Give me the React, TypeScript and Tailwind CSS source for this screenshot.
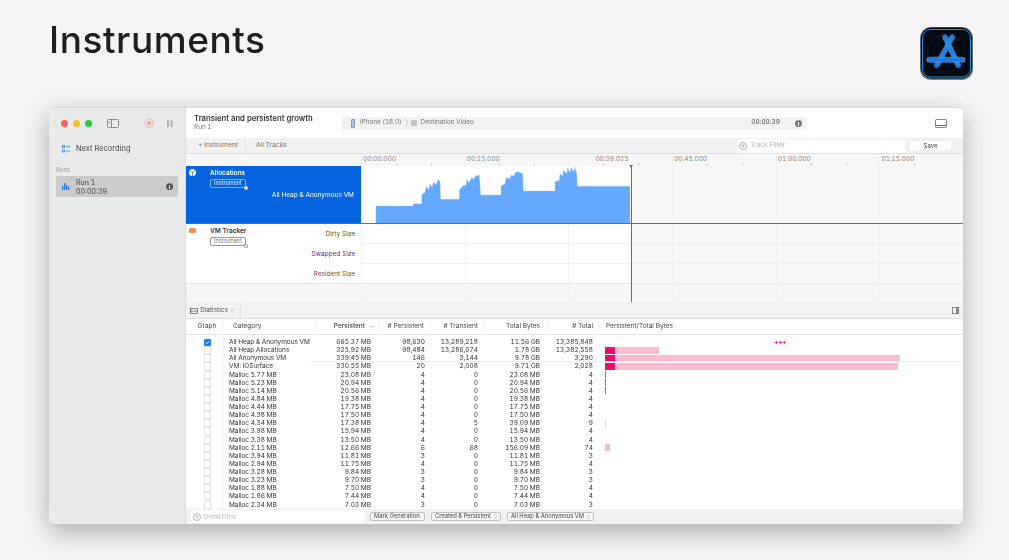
import React from "react";

const font = { fontFamily: "Inter, 'Liberation Sans', sans-serif" };

const rows: [string, string, string, string, string, string][] = [
  ["All Heap & Anonymous VM", "665.37 MB", "98,630", "13,289,218", "11.56 GB", "13,385,848"],
  ["All Heap Allocations", "325.92 MB", "98,484", "13,286,074", "1.78 GB", "13,382,558"],
  ["All Anonymous VM", "339.45 MB", "146", "3,144", "9.78 GB", "3,290"],
  ["VM: IOSurface", "330.55 MB", "20", "2,008", "9.71 GB", "2,028"],
  ["Malloc 5.77 MB", "23.08 MB", "4", "0", "23.08 MB", "4"],
  ["Malloc 5.23 MB", "20.94 MB", "4", "0", "20.94 MB", "4"],
  ["Malloc 5.14 MB", "20.56 MB", "4", "0", "20.56 MB", "4"],
  ["Malloc 4.84 MB", "19.38 MB", "4", "0", "19.38 MB", "4"],
  ["Malloc 4.44 MB", "17.75 MB", "4", "0", "17.75 MB", "4"],
  ["Malloc 4.38 MB", "17.50 MB", "4", "0", "17.50 MB", "4"],
  ["Malloc 4.34 MB", "17.38 MB", "4", "5", "39.09 MB", "9"],
  ["Malloc 3.98 MB", "15.94 MB", "4", "0", "15.94 MB", "4"],
  ["Malloc 3.38 MB", "13.50 MB", "4", "0", "13.50 MB", "4"],
  ["Malloc 2.11 MB", "12.66 MB", "6", "68", "156.09 MB", "74"],
  ["Malloc 3.94 MB", "11.81 MB", "3", "0", "11.81 MB", "3"],
  ["Malloc 2.94 MB", "11.75 MB", "4", "0", "11.75 MB", "4"],
  ["Malloc 3.28 MB", "9.84 MB", "3", "0", "9.84 MB", "3"],
  ["Malloc 3.23 MB", "9.70 MB", "3", "0", "9.70 MB", "3"],
  ["Malloc 1.88 MB", "7.50 MB", "4", "0", "7.50 MB", "4"],
  ["Malloc 1.86 MB", "7.44 MB", "4", "0", "7.44 MB", "4"],
  ["Malloc 2.34 MB", "7.03 MB", "3", "0", "7.03 MB", "3"],
];

const chart =
  "14.7,58 15,40 52.3,40 52.3,37.7 60.7,37.7 60.7,28.3 64,26.7 65,21 68,23.3 69,17.7 71,21 73,15.7 75,19 77.3,13.3 79,15.7 79.7,33.3 98.3,33.3 98.3,24.3 101.7,20 105,19 105.7,13.3 108,16.7 110.7,11.7 112.3,13.3 115,10 118.3,9 119.7,29 140,29 140,20 144,17.7 145,11.7 149,12.7 150,9 153,10 154,6.7 157,5.7 161.7,7.7 162.3,25 194,25 194,15.7 198.3,14.3 199,7.7 201.7,10 202.3,4.3 205.7,7.7 206.7,1.7 209,6.7 210,1.7 213,5.7 213.7,0.7 215.7,6.7 216.3,20.3 269,20.3 269,58";

function Chevrons() {
  return (
    <svg width="3" height="5" viewBox="0 0 3 5" fill="none" stroke="#888" strokeWidth="0.5" className="shrink-0">
      <path d="M0.3 1.8 1.5 0.6 2.7 1.8M0.3 3.2 1.5 4.4 2.7 3.2" />
    </svg>
  );
}

function FilterIcon() {
  return (
    <svg width="8" height="8" viewBox="0 0 8 8" fill="none" stroke="#888" strokeWidth="0.6" className="shrink-0 mr-[3px]">
      <circle cx="4" cy="4" r="3.5" />
      <path d="M2 3H6M3 4.5H5" />
    </svg>
  );
}

function Select({ label, w, chevron = true }: { label: string; w: string; chevron?: boolean }) {
  return (
    <div className={`${w} h-[9px] shrink-0 rounded-[2px] border border-[#c2c2c2] bg-[#f7f7f7] flex items-center justify-between px-[3px] text-[5.8px] text-[#444]`}>
      <span className="whitespace-nowrap">{label}</span>
      {chevron && <Chevrons />}
    </div>
  );
}

function AppIcon() {
  const leg1 = "M25 10 L38.3 38.3";
  const leg2 = "M32.3 10 L16.7 38.3";
  return (
    <svg width="53" height="53" viewBox="0 0 53 53" className="block">
      <rect x="0" y="0" width="53" height="53" rx="11" fill="#7b7d80" />
      <rect x="0.8" y="0.6" width="51.4" height="50.8" rx="10.5" fill="#050a12" />
      <rect x="2.5" y="2.5" width="48" height="47.5" rx="8" fill="none" stroke="#1a8fe0" strokeWidth="1" />
      <circle cx="26.5" cy="26" r="19" fill="none" stroke="#16293a" strokeWidth="0.5" />
      <circle cx="26.5" cy="26" r="13" fill="none" stroke="#13212e" strokeWidth="0.5" />
      <path d={leg1} stroke="#1f72cc" strokeWidth="5.4" strokeLinecap="round" fill="none" />
      <path d={leg2} stroke="#1f72cc" strokeWidth="5.4" strokeLinecap="round" fill="none" />
      <path d={leg1} stroke="#55b2f6" strokeWidth="5.4" strokeDasharray="0.6 1.1" fill="none" opacity="0.6" />
      <path d={leg2} stroke="#55b2f6" strokeWidth="5.4" strokeDasharray="0.6 1.1" fill="none" opacity="0.6" />
      <rect x="6.7" y="30.2" width="38.3" height="5" rx="2.5" fill="#2079d6" stroke="#4aa9f2" strokeWidth="0.6" />
    </svg>
  );
}

function InfoDot({ bg }: { bg: string }) {
  return <span className={`w-[7px] h-[7px] shrink-0 rounded-full ${bg} text-white text-[6px] leading-[7px] text-center font-bold`}>i</span>;
}

function InstrumentTag({ on }: { on: boolean }) {
  return (
    <div className={`relative ml-[24px] mt-[2px] w-[36px] h-[9px] rounded-[2px] border text-[5.5px] leading-[7px] text-center ${on ? "border-[#7fb0ee] text-[#e0ecfb]" : "border-[#999] text-[#777]"}`}>
      Instrument
      <span className={`absolute right-[-3px] bottom-[-3px] w-[4px] h-[4px] rounded-[1px] border-[0.5px] border-[#aaa] ${on ? "bg-white" : "bg-[#f4f4f4]"}`} />
    </div>
  );
}

const Ruler = ["00:00.000", "00:15.000", "00:39.025", "00:45.000", "01:00.000", "01:15.000"];
const grid = [175, 279, 382, 486, 590, 693];
const ticks = [210, 245, 313, 348, 417, 452, 521, 556, 625, 660, 728];

export default function App() {
  return (
    <div className="w-[1009px] h-[560px] bg-[#f5f5f7] overflow-hidden" style={font}>
      <header className="h-[107px] flex justify-between pl-[49px] pr-[36px] blur-[0.3px]">
        <h1 className="text-[37px] leading-[44px] mt-[18px] font-[550] text-[#1f1f21] tracking-[0.55px]">Instruments</h1>
        <div className="mt-[27px]">
          <AppIcon />
        </div>
      </header>

      <div className="ml-[49px] w-[914px] h-[417px] rounded-[5px] overflow-hidden flex border-t border-[#d6d6d6] shadow-[0_8px_26px_rgba(0,0,0,0.3)] blur-[0.3px] tabular-nums">
        {/* sidebar */}
        <aside className="w-[137px] shrink-0 bg-[#e9ebeb] flex flex-col border-r border-[#dcdcdc]">
          <div className="h-[30px] flex items-center pl-[12px]">
            <div className="flex gap-[5px]">
              <span className="w-[7px] h-[7px] rounded-full bg-[#fb5f57]" />
              <span className="w-[7px] h-[7px] rounded-full bg-[#fcbc2e]" />
              <span className="w-[7px] h-[7px] rounded-full bg-[#29c83f]" />
            </div>
            <svg className="ml-[15px]" width="12" height="9" viewBox="0 0 12 9" fill="none" stroke="#777" strokeWidth="0.8">
              <rect x="0.5" y="0.5" width="11" height="8" rx="1" />
              <path d="M4.5 0.5V8.5" />
              <path d="M1.5 2.5H3M1.5 4H3" strokeWidth="0.6" />
            </svg>
            <svg className="ml-[25px]" width="10" height="10" viewBox="0 0 10 10" fill="none">
              <circle cx="5" cy="5" r="4.3" stroke="#eda6a0" strokeWidth="0.8" />
              <circle cx="5" cy="5" r="2.2" fill="#eda6a0" />
            </svg>
            <svg className="ml-[13px]" width="6" height="7" viewBox="0 0 6 7" fill="#b5b5b5">
              <rect x="0" y="0" width="2.2" height="7" />
              <rect x="3.6" y="0" width="2.2" height="7" />
            </svg>
          </div>
          <div className="mt-[5px] h-[12px] flex items-center pl-[13px] gap-[6px] text-[7.4px] tracking-[0.05px] text-[#444]">
            <svg width="8" height="8" viewBox="0 0 8 8" fill="none" stroke="#2f7fe6" strokeWidth="0.8">
              <rect x="0.4" y="0.6" width="2" height="2" />
              <rect x="0.4" y="5" width="2" height="2" />
              <path d="M4 1.6H8M4 6H8" />
            </svg>
            <span>Next Recording</span>
          </div>
          <div className="mt-[11px] pl-[7px] text-[6px] leading-[8px] text-[#a0a0a0]">Runs</div>
          <div className="mt-[2px] mx-[7px] h-[21px] rounded-[2px] bg-[#cbcbcb] flex items-center pl-[6px] pr-[5px]">
            <svg width="8" height="7" viewBox="0 0 8 7" fill="#2f7fe6">
              <rect x="0" y="3" width="1.4" height="4" />
              <rect x="2" y="0" width="1.4" height="7" />
              <rect x="4" y="2" width="1.4" height="5" />
              <rect x="6" y="3.5" width="1.4" height="3.5" />
            </svg>
            <div className="ml-[6px] text-[7px] leading-[9px] text-[#444] flex-1">
              <div>Run 1</div>
              <div>00:00:39</div>
            </div>
            <InfoDot bg="bg-[#555]" />
          </div>
        </aside>

        {/* main */}
        <main className="flex-1 min-w-0 flex flex-col bg-white">
          <div className="h-[30px] flex items-center pl-[8px] pr-[16px] shrink-0">
            <div className="w-[148px] leading-[9px]">
              <div className="text-[7.7px] font-semibold text-[#333] whitespace-nowrap">Transient and persistent growth</div>
              <div className="text-[6.5px] text-[#777]">Run 1</div>
            </div>
            <div className="w-[465px] h-[13px] rounded-[3px] bg-[#f2f2f2] flex items-center pl-[9px] pr-[5px] text-[6.4px] text-[#777]">
              <span className="w-[4px] h-[9px] rounded-[1px] bg-[#a9c8e6] border-[0.5px] border-[#8a9aaa] mr-[5px]" />
              <span>iPhone (18.0)</span>
              <svg className="mx-[3px]" width="3" height="8" viewBox="0 0 3 8" fill="none" stroke="#aaa" strokeWidth="0.5">
                <path d="M0.3 0.3 2.7 4 0.3 7.7" />
              </svg>
              <span className="w-[6px] h-[6px] rounded-[1px] bg-[#c5c5c5] mr-[4px]" />
              <span>Destination Video</span>
              <span className="ml-auto mr-[15px] text-[#444] text-[6.5px]">00:00:39</span>
              <InfoDot bg="bg-[#777]" />
            </div>
            <svg className="ml-auto" width="12" height="9" viewBox="0 0 12 9" fill="none" stroke="#666" strokeWidth="0.8">
              <rect x="0.5" y="0.5" width="11" height="8" rx="1" />
              <path d="M1 6.5H11" strokeWidth="1.2" />
            </svg>
          </div>

          <div className="h-[16px] shrink-0 bg-[#f1f1f1] border-b border-[#dedede] flex items-center pl-[12px] pr-[12px] text-[6.7px] text-[#777]">
            <span>+ Instrument</span>
            <span className="ml-[7px] w-px h-[14px] bg-[#e2e2e2]" />
            <span className="ml-[10px]">All Tracks</span>
            <div className="ml-auto w-[168px] h-[14px] bg-white rounded-[2px] flex items-center pl-[2px] text-[#b5b5b5]">
              <FilterIcon />
              Track Filter
            </div>
            <div className="ml-[5px] w-[41px] h-[9px] bg-white rounded-[1px] text-[#444] text-[6px] leading-[9px] text-center">Save</div>
          </div>

          {/* timeline */}
          <div className="relative h-[148px] shrink-0 flex flex-col overflow-hidden">
            <div className="h-[12px] shrink-0 flex bg-[#f7f7f7]">
              <div className="w-[175px] shrink-0" />
              <div className="flex-1 flex text-[6.5px] leading-[11px] text-[#888]">
                {Ruler.map((t, i) => (
                  <div key={t} className="w-[103.7px] shrink-0 pl-[2px] flex">
                    <span className={i === 2 ? "ml-[25px]" : ""}>{t}</span>
                  </div>
                ))}
              </div>
            </div>

            <div className="relative h-[58px] shrink-0 flex">
              <div className="relative z-10 w-[175px] shrink-0 bg-[#0665de] text-white">
                <div className="flex pl-[3px] pt-[3px]">
                  <svg width="7" height="7" viewBox="0 0 7 7">
                    <circle cx="3.5" cy="3.5" r="3.5" fill="#fff" />
                    <path d="M3.5 3.5V7M3.5 3.5 0.6 1.6M3.5 3.5 6.4 1.6" stroke="#0665de" strokeWidth="0.7" />
                  </svg>
                  <span className="ml-[14px] text-[6.5px] leading-[8px] font-semibold">Allocations</span>
                </div>
                <InstrumentTag on />
                <div className="mt-[3px] pr-[7px] text-right text-[6.5px] leading-[8px]">All Heap &amp; Anonymous VM</div>
              </div>
              <div className="relative z-10 w-[270px] shrink-0 bg-white">
                <svg width="270" height="58" viewBox="0 0 270 58" className="block">
                  <polygon points={chart} fill="#64a9fd" stroke="#a9d0ff" strokeWidth="0.3" />
                </svg>
              </div>
              <div className="flex-1 bg-[#f8f8f8]" />
              <div className="absolute z-20 left-0 right-0 bottom-0 h-[1.4px] bg-[#2a78e8]" />
            </div>

            <div className="h-[60px] shrink-0 flex border-b border-[#e8e8e8]">
              <div className="relative z-10 w-[175px] shrink-0 bg-white flex">
                <div className="flex-1">
                  <div className="flex pl-[3px] pt-[4px]">
                    <span className="w-[7px] h-[5px] rounded-[1.5px] bg-[#f7904a]" />
                    <span className="ml-[14px] text-[6.5px] leading-[7px] font-semibold text-[#333]">VM Tracker</span>
                  </div>
                  <InstrumentTag on={false} />
                </div>
                <div className="pr-[6px] text-right text-[6.5px] leading-[20px] whitespace-nowrap">
                  <div className="text-[#2c6a2c]">Dirty Size</div>
                  <div className="text-[#5f2a93]">Swapped Size</div>
                  <div className="text-[#8a4a2a]">Resident Size</div>
                </div>
              </div>
              <div className="w-[270px] shrink-0 flex flex-col">
                <div className="h-[20px] border-b border-[#eeeeee]" />
                <div className="h-[20px] border-b border-[#eeeeee]" />
              </div>
              <div className="flex-1 flex flex-col bg-[#f8f8f8]">
                <div className="h-[20px] border-b border-[#eeeeee]" />
                <div className="h-[20px] border-b border-[#eeeeee]" />
              </div>
            </div>
            <div className="flex-1 bg-[#f6f6f6]" />

            {/* grid lines, ruler ticks and playhead lie over the timeline */}
            {grid.map((x) => (
              <div key={x} className="absolute top-0 bottom-0 w-px bg-[#f0f0f0]" style={{ left: x }} />
            ))}
            {ticks.map((x) => (
              <div key={x} className="absolute top-[9px] h-[3px] w-px bg-[#d4d4d4]" style={{ left: x }} />
            ))}
            <div className="absolute z-20 top-[12px] left-[445px] bottom-0 w-[1.4px] bg-[#2a78e8]" />
            <div className="absolute z-20 top-[11px] left-[443px] w-0 h-0 border-x-[2.5px] border-x-transparent border-t-[3px] border-t-[#2a78e8]" />
          </div>

          {/* statistics bar */}
          <div className="h-[17px] shrink-0 bg-[#f2f2f2] border-b border-[#dedede] flex items-center pl-[4px] pr-[4px] pt-[1px] text-[6.5px] text-[#555]">
            <svg width="8" height="6" viewBox="0 0 8 6" fill="none" stroke="#555" strokeWidth="0.7">
              <rect x="0.4" y="0.4" width="7.2" height="5.2" />
              <path d="M0.4 3H7.6" />
            </svg>
            <span className="ml-[2px]">Statistics</span>
            <span className="ml-[3px] flex">
              <Chevrons />
            </span>
            <span className="ml-[6px] w-px h-[15px] bg-[#e3e3e3]" />
            <svg className="ml-auto" width="7" height="7" viewBox="0 0 7 7" fill="none" stroke="#777" strokeWidth="0.8">
              <rect x="0.4" y="0.4" width="6.2" height="6.2" />
              <rect x="4.5" y="0.4" width="2" height="6.2" fill="#999" />
            </svg>
          </div>

          {/* table */}
          <div className="h-[16px] shrink-0 flex items-center border-b border-[#e4e4e4] text-[6.5px] text-[#444]">
            <div className="w-[37px] shrink-0 text-center pl-[5px]">Graph</div>
            <div className="w-[92px] shrink-0 pl-[9px] border-l border-[#f1f1f1]">Category</div>
            <div className="w-[63px] shrink-0 pr-[4px] font-medium flex justify-end items-center gap-[4px] border-l border-[#f1f1f1]">
              <span>Persistent</span>
              <svg width="5" height="3" viewBox="0 0 5 3" fill="none" stroke="#999" strokeWidth="0.6">
                <path d="M0.4 0.4 2.5 2.4 4.6 0.4" />
              </svg>
            </div>
            <div className="w-[52px] shrink-0 text-right pr-[6px] border-l border-[#f1f1f1]"># Persistent</div>
            <div className="w-[54px] shrink-0 text-right pr-[6px] border-l border-[#f1f1f1]"># Transient</div>
            <div className="w-[63px] shrink-0 text-right pr-[7px] border-l border-[#f1f1f1]">Total Bytes</div>
            <div className="w-[52px] shrink-0 text-right pr-[6px] border-l border-[#f1f1f1]"># Total</div>
            <div className="pl-[6px] border-l border-[#f1f1f1]">Persistent/Total Bytes</div>
          </div>
          <div className="relative flex-1 min-h-0 overflow-hidden pt-[3px] text-[6.5px] text-[#333]">
            {rows.map((r, i) => (
              <div key={r[0] + i} className="h-[8.13px] flex items-center leading-[8px]">
                <div className="w-[37px] h-full shrink-0 flex justify-center items-center pl-[6px]">
                  {i === 0 ? (
                    <span className="w-[7px] h-[7px] rounded-[1px] bg-[#1a7ff0] text-white text-[6px] leading-[7px] text-center">✓</span>
                  ) : (
                    <span className="w-[7px] h-[8px] border border-[#e2e2e2]" />
                  )}
                </div>
                <div className="w-[92px] h-full shrink-0 pl-[5px] whitespace-nowrap border-l border-[#f3f3f3] tracking-[-0.05px]">{r[0]}</div>
                <div className="w-[63px] shrink-0 text-right pr-[7px]">{r[1]}</div>
                <div className="w-[52px] shrink-0 text-right pr-[5px]">{r[2]}</div>
                <div className="w-[54px] shrink-0 text-right pr-[6px]">{r[3]}</div>
                <div className="w-[63px] shrink-0 text-right pr-[7px]">{r[4]}</div>
                <div className="w-[52px] shrink-0 text-right pr-[6px]">{r[5]}</div>
                <div className="flex-1 pl-[6px] flex h-full items-center">
                  {i === 0 && <span className="ml-[169px] text-[7px] text-[#d01aa8] font-bold leading-none tracking-[-0.5px]">+++</span>}
                  {i === 1 && <Bar w="w-[54px]" />}
                  {i === 2 && <Bar w="w-[295px]" />}
                  {i === 3 && <Bar w="w-[293px]" />}
                  {i >= 4 && i <= 6 && <span className="w-[1px] h-[7px] bg-[#b5657b]" />}
                  {i === 10 && <span className="w-[1px] h-[7px] bg-[#f0d4de]" />}
                  {i === 13 && <span className="w-[5px] h-[7px] bg-[#f7bcc8]" />}
                </div>
              </div>
            ))}
            <div className="absolute left-[124px] right-0 top-[26px] h-px bg-[#ececec]" />
          </div>

          {/* bottom bar */}
          <div className="h-[15px] shrink-0 bg-[#f1f1f1] flex items-center pl-[5px] gap-[6px]">
            <div className="w-[174px] h-[13px] bg-white rounded-[2px] flex items-center pl-[2px] text-[6px] text-[#b9b9b9] mr-[-1px]">
              <FilterIcon />
              Detail Filter
            </div>
            <Select label="Mark Generation" w="w-[55px]" chevron={false} />
            <Select label="Created & Persistent" w="w-[70px]" />
            <Select label="All Heap & Anonymous VM" w="w-[87px]" />
          </div>
        </main>
      </div>
    </div>
  );
}

function Bar({ w }: { w: string }) {
  return (
    <div className={`${w} h-[7px] bg-[#fbb9d2] flex`}>
      <div className="w-[10px] h-full bg-[#ee0a70]" />
    </div>
  );
}
